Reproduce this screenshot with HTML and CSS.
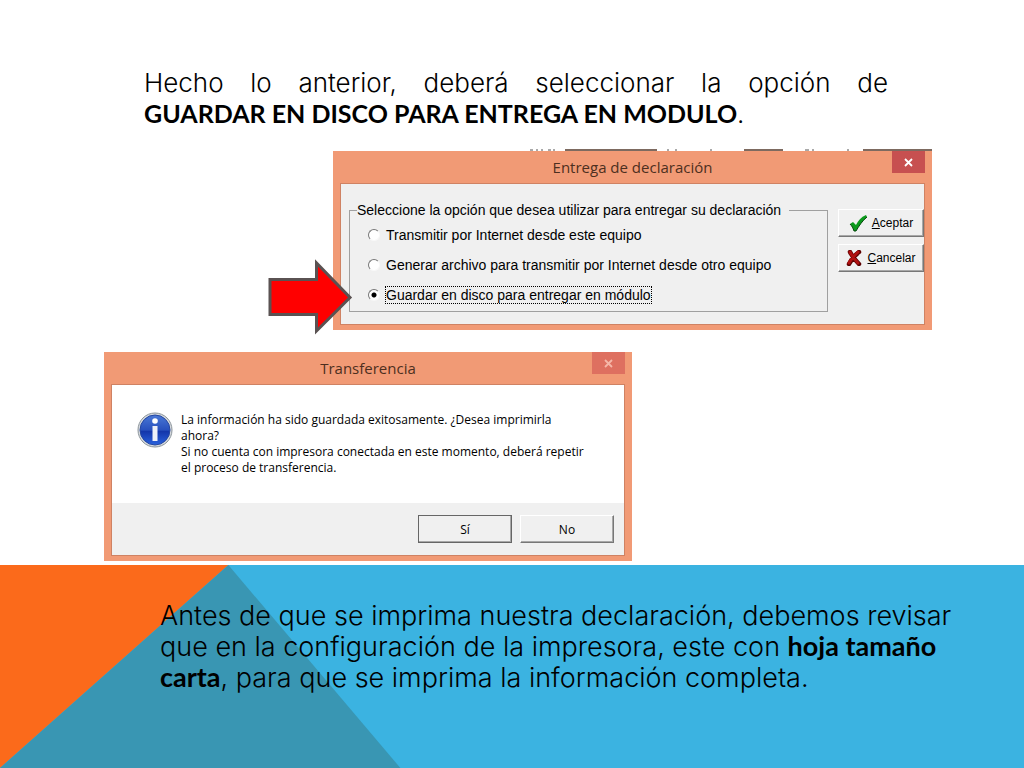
FILE: index.html
```html
<!DOCTYPE html>
<html lang="es">

<head>
    <meta charset="UTF-8">
    <meta name="viewport" content="width=device-width, initial-scale=1.0">
    <title>Entrega de declaración</title>
    <link rel="stylesheet" href="styles.css">
</head>

<body>
    <main class="content">
        <p class="text intro">Hecho lo anterior, deberá seleccionar la opción de <strong>GUARDAR EN DISCO PARA ENTREGA EN MODULO</strong>.</p>

        <!-- ventana de entrega -->
        <div class="delivery">
            <svg class="scraps" viewBox="0 0 599 2" aria-hidden="true">
                <path d="M232 1h92M411 1h39M530 1h69" stroke="#7d6a60" stroke-width="2"/>
                <path d="M197 1h3M203 1h2M208 1h2M215 1h3M220 1h2M334 1h2M342 1h2M377 1h2M472 1h4M479 1h2M514 1h2" stroke="#555" stroke-width="1"/>
            </svg>
            <section class="window">
                <header class="titlebar">
                    <h2>Entrega de declaración</h2>
                    <button type="button" class="close" aria-label="Cerrar">
                        <svg width="9" height="9" viewBox="0 0 9 9"><path d="M1 1l7 7M8 1l-7 7" stroke="#fff" stroke-width="1.800"/></svg>
                    </button>
                </header>
                <form class="panel options">
                    <fieldset>
                        <legend>Seleccione la opción que desea utilizar para entregar su declaración</legend>
                        <label><input type="radio" name="entrega"><span>Transmitir por Internet desde este equipo</span></label>
                        <label><input type="radio" name="entrega"><span>Generar archivo para transmitir por Internet desde otro equipo</span></label>
                        <label><input type="radio" name="entrega" checked><span>Guardar en disco para entregar en módulo</span></label>
                    </fieldset>
                    <div class="actions">
                        <button type="button" class="btn">
                            <svg width="18" height="18" viewBox="0 0 18 18"><path d="M1 10l3-2 3 3C9 7 12 3 17 1l1 2C13 7 10 12 7 17H5C4 14 3 12 1 10z" fill="#0b9a1c"/><path d="M1 10c2 2 3 4 4 7h2c3-5 6-10 11-14" fill="none" stroke="#06480d"/></svg>
                            <span><u>A</u>ceptar</span>
                        </button>
                        <button type="button" class="btn">
                            <svg width="16" height="16" viewBox="0 0 16 16"><path d="M4 2c2 4 6 9 9 12M13 2C9 5 5 10 3 14" fill="none" stroke="#5c0000" stroke-width="4.500" stroke-linecap="round"/><path d="M4 2c2 4 5 8 8 11M12 2C9 5 5 9 3 13" fill="none" stroke="#b01010" stroke-width="3" stroke-linecap="round"/></svg>
                            <span><u>C</u>ancelar</span>
                        </button>
                    </div>
                </form>
            </section>
            <svg class="arrow" width="86" height="76" viewBox="0 0 86 76" aria-hidden="true">
                <path d="M3 20.500h46.500V4L83 38.500 49.500 72V55.500H3z" fill="#f00" stroke="#5a5252" stroke-width="3"/>
            </svg>
        </div>

        <!-- aviso de transferencia -->
        <section class="window transfer">
            <header class="titlebar">
                <h2>Transferencia</h2>
                <button type="button" class="close inactive" aria-label="Cerrar">
                    <svg width="9" height="9" viewBox="0 0 9 9"><path d="M1 1l7 7M8 1l-7 7" stroke="#f5b7a8" stroke-width="1.800"/></svg>
                </button>
            </header>
            <div class="panel">
                <div class="message">
                    <svg width="36" height="36" viewBox="0 0 36 36" aria-hidden="true">
                        <defs>
                            <linearGradient id="blue" x1="0" y1="0" x2="0" y2="1">
                                <stop offset="0" stop-color="#4a78d6"/>
                                <stop offset="0.500" stop-color="#2850bd"/>
                                <stop offset="0.550" stop-color="#1436ab"/>
                                <stop offset="1" stop-color="#2a62dd"/>
                            </linearGradient>
                        </defs>
                        <circle cx="18" cy="18" r="17" fill="#d5d9dd" stroke="#8b949b"/>
                        <circle cx="18" cy="18" r="15" fill="url(#blue)" stroke="#2446a0"/>
                        <circle cx="18" cy="9" r="2.800" fill="#fff"/>
                        <path d="M15.500 14h5v15h-5z" fill="#eef0f8"/>
                    </svg>
                    <p>La información ha sido guardada exitosamente. ¿Desea imprimirla ahora?<br>Si no cuenta con impresora conectada en este momento, deberá repetir el proceso de transferencia.</p>
                </div>
                <footer class="answers">
                    <button type="button" class="btn default">Sí</button>
                    <button type="button" class="btn">No</button>
                </footer>
            </div>
        </section>
    </main>

    <div class="band">
        <p class="text">Antes de que se imprima nuestra declaración, debemos revisar<br>que en la configuración de la impresora, este con <strong>hoja tamaño<br>carta</strong>, para que se imprima la información completa.</p>
    </div>
</body>

</html>
```
FILE: styles.css
```css
* {
    box-sizing: border-box;
}

body {
    margin: 0;
    min-height: 100vh;
    display: flex;
    flex-direction: column;
    background: #fff;
    color: #000;
    font-family: "Open Sans", "Noto Sans", sans-serif;
}

h2,
p {
    margin: 0;
}

button {
    padding: 0;
    font: inherit;
    color: inherit;
    cursor: pointer;
}

.content {
    display: flex;
    flex-direction: column;
    padding: 67px 92px 4px 104px;
}

.text {
    font-family: Inter, Lato, sans-serif;
    font-weight: 300;
    font-size: 27px;
    line-height: 31px;
}

.text strong {
    font-family: Lato, sans-serif;
    font-weight: 700;
    font-size: 27px;
    line-height: 1;
}

.intro {
    margin: 0 44px 20px 40px;
    font-size: 26px;
    text-align: justify;
}

.intro strong {
    font-size: 25px;
    white-space: nowrap;
}

/* ventanas */
.window {
    background: #f19a75;
    padding: 0 7px 5px;
}

.titlebar {
    position: relative;
    height: 32px;
    display: flex;
    align-items: center;
    justify-content: center;
}

.titlebar h2 {
    font-size: 15px;
    font-weight: 400;
    line-height: 20px;
    color: #4d2f20;
}

.close {
    position: absolute;
    top: 0;
    right: 0;
    width: 33px;
    height: 22px;
    display: flex;
    align-items: center;
    justify-content: center;
    border: none;
    background: #c75050;
}

.close.inactive {
    background: #de7060;
}

.panel {
    background: #f0f0f0;
    border: 1px solid #cf8263;
}

.delivery {
    position: relative;
    align-self: flex-end;
    width: 100%;
    max-width: 599px;
    margin-bottom: 22px;
}

.scraps {
    display: block;
    width: 100%;
    height: 2px;
}

.arrow {
    position: absolute;
    left: -66px;
    top: 110px;
}

/* opciones */
.options {
    display: flex;
    justify-content: space-between;
    height: 142px;
    padding: 18px 0 12px 8px;
    font-family: "Liberation Sans", Arial, sans-serif;
    font-size: 14px;
}

fieldset {
    flex: 1;
    max-width: 479px;
    min-width: 0;
    margin: 0;
    padding: 2px 0 0 18px;
    border: 1px solid #a0a0a0;
}

legend {
    margin-left: -11px;
    padding: 0 8px 0 0;
    line-height: 16px;
}

fieldset label {
    display: flex;
    align-items: center;
    gap: 5px;
    height: 30px;
}

fieldset label span {
    line-height: 16px;
    border: 1px solid transparent;
}

input[type="radio"] {
    appearance: none;
    width: 12px;
    height: 12px;
    margin: 0;
    border: 1px solid;
    border-color: #777 #f8f8f8 #f8f8f8 #777;
    border-radius: 50%;
    background: #fff;
}

input[type="radio"]:checked {
    background: radial-gradient(circle, #000 2px, #fff 3px);
}

input[type="radio"]:checked + span {
    border: 1px dotted #000;
}

.actions {
    display: flex;
    flex-direction: column;
    gap: 7px;
    padding-top: 7px;
}

.btn {
    display: flex;
    align-items: center;
    justify-content: center;
    gap: 5px;
    height: 28px;
    background: #f0f0f0;
    border: 1px solid;
    border-color: #fff #777 #777 #fff;
    box-shadow: inset -1px -1px 0 #a8a8a8;
}

.actions .btn {
    width: 86px;
    font-size: 12px;
}

/* aviso */
.transfer {
    width: 100%;
    max-width: 528px;
}

.message {
    display: flex;
    gap: 8px;
    height: 118px;
    padding: 27px 36px 0 25px;
    background: #fff;
    font-size: 12px;
    line-height: 16px;
}

.message svg {
    flex: none;
}

.answers {
    display: flex;
    justify-content: flex-end;
    gap: 8px;
    padding: 12px 10px;
    font-size: 12px;
}

.answers .btn {
    width: 94px;
}

.btn.default {
    border-color: #666;
}

/* franja inferior */
.band {
    position: relative;
    flex: 1;
    padding: 35px 64px 72px 160px;
    background: #3bb3e1;
}

.band::before,
.band::after {
    content: "";
    position: absolute;
    inset: 0;
}

.band::before {
    background: #fb6a1b;
    clip-path: polygon(0 0, 22.3% 0, 0 100%);
}

.band::after {
    background: #3996b3;
    clip-path: polygon(22.3% 0, 39.1% 100%, 0 100%);
}

.band .text {
    position: relative;
    z-index: 1;
}
```
